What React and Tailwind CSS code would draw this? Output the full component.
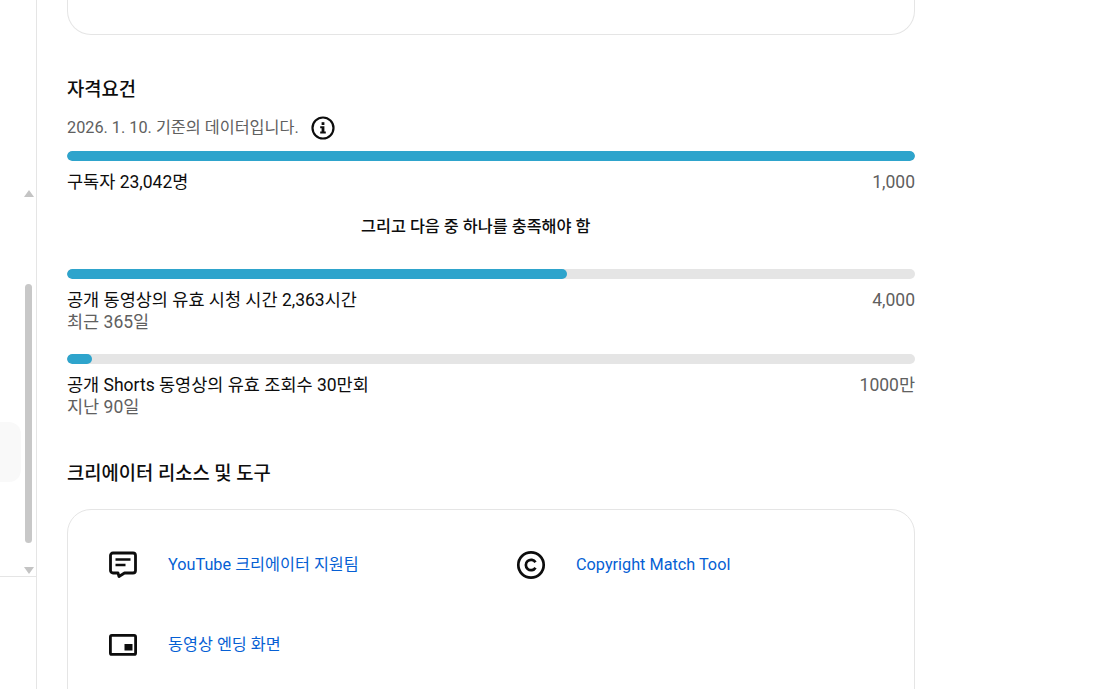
const FONT = "font-['Roboto','Noto_Sans_CJK_KR',sans-serif]";

function Metric({ pct, label, sub, target, className = "" }) {
  return (
    <div className={className}>
      <div className="h-[10px] rounded-full bg-[#e5e5e5] overflow-hidden">
        <div className="h-full rounded-full bg-[#2ea4cc]" style={{ width: `${pct}%` }} />
      </div>
      <div className="flex justify-between mt-[10px] text-[17.5px] leading-[22px]">
        <div className="text-[#0d0d0d]">{label}</div>
        <div className="text-[#606060]">{target}</div>
      </div>
      {sub && <div className="mt-[1px] text-[17.5px] leading-[21px] text-[#606060]">{sub}</div>}
    </div>
  );
}

function InfoIcon() {
  return (
    <svg width="24" height="24" viewBox="0 0 24 24" fill="none">
      <circle cx="12" cy="12" r="10.500" stroke="#0d0d0d" strokeWidth="2.200" />
      <rect x="10.600" y="6.200" width="2.800" height="2.800" fill="#0d0d0d" />
      <path d="M9.200 10.200h4.200v5.300h1.400v2H9.200v-2h1.400V12.200H9.200z" fill="#0d0d0d" />
    </svg>
  );
}

function ChatIcon() {
  return (
    <svg width="30" height="30" viewBox="0 0 30 30" fill="none">
      <path d="M5 3h20a2.500 2.500 0 0 1 2.500 2.500v15a2.500 2.500 0 0 1-2.500 2.500H16.500l-5.500 3.500-1-3.500H5a2.500 2.500 0 0 1-2.500-2.500v-15A2.500 2.500 0 0 1 5 3z" stroke="#0d0d0d" strokeWidth="2.800" strokeLinejoin="round" />
      <path d="M7.500 9.500h15M7.500 15h10" stroke="#0d0d0d" strokeWidth="2.400" />
    </svg>
  );
}

function CopyrightIcon() {
  return (
    <svg width="30" height="30" viewBox="0 0 30 30" fill="none">
      <circle cx="15" cy="15" r="12.700" stroke="#0d0d0d" strokeWidth="2.700" />
      <path d="M19.500 12.300a5.200 5.200 0 1 0 0 5.400" stroke="#0d0d0d" strokeWidth="2.700" />
    </svg>
  );
}

function EndScreenIcon() {
  return (
    <svg width="30" height="30" viewBox="0 0 30 30" fill="none">
      <rect x="2.400" y="5.400" width="25.200" height="19" rx="1.500" stroke="#0d0d0d" strokeWidth="2.800" />
      <rect x="16.500" y="14" width="8" height="6.500" fill="#0d0d0d" />
    </svg>
  );
}

function Tool({ icon, label }) {
  return (
    <div className="flex items-center h-[80px]">
      <div className="w-[30px] h-[30px] mr-[30px] flex items-center justify-center">{icon}</div>
      <a className="text-[16.250px] leading-[22px] text-[#065fd4]">{label}</a>
    </div>
  );
}

export default function App() {
  return (
    <div className={`${FONT} h-[689px] w-[1103px] overflow-hidden bg-white flex`}>
      <aside className="w-[37px] shrink-0 h-full border-r border-[#e5e5e5]">
        <div className="h-[577px] border-b border-[#e5e5e5] flex">
          <div className="w-[21px] h-[60px] mt-[422px] rounded-r-[12px] bg-[#f9f9f9]" />
          <div className="w-[15px] flex flex-col items-center pl-[1px] pr-[1px]">
            <div className="mt-[190px] w-0 h-0 border-x-[5px] border-x-transparent border-b-[7px] border-b-[#c4c4c4]" />
            <div className="mt-[87px] w-[7px] h-[259px] rounded-full bg-[#c8c8c8]" />
            <div className="mt-[24px] w-0 h-0 border-x-[5px] border-x-transparent border-t-[7px] border-t-[#c4c4c4]" />
          </div>
        </div>
      </aside>

      <main className="w-[848px] ml-[30px]">
        <div className="h-[35px] rounded-b-[24px] border border-t-0 border-[#e5e5e5]" />

        <h2 className="mt-[42px] text-[18.750px] leading-[26px] font-medium text-[#0d0d0d]">자격요건</h2>

        <div className="mt-[12px] flex items-center h-[26px]">
          <span className="text-[16.250px] leading-[20px] text-[#606060]">2026. 1. 10. 기준의 데이터입니다.</span>
          <span className="ml-[12px]"><InfoIcon /></span>
        </div>

        <Metric className="mt-[10px]" pct={100} label="구독자 23,042명" target="1,000" />

        <div className="mt-[23px] pl-[294px] text-[16.250px] leading-[22px] font-medium text-[#0d0d0d]">
          그리고 다음 중 하나를 충족해야 함
        </div>

        <Metric
          className="mt-[31px]"
          pct={59}
          label="공개 동영상의 유효 시청 시간 2,363시간"
          sub="최근 365일"
          target="4,000"
        />
        <Metric
          className="mt-[21px]"
          pct={3}
          label="공개 Shorts 동영상의 유효 조회수 30만회"
          sub="지난 90일"
          target="1000만"
        />

        <h2 className="mt-[43px] text-[18.750px] leading-[26px] font-medium text-[#0d0d0d]">크리에이터 리소스 및 도구</h2>

        <div className="mt-[22px] h-[220px] rounded-[24px] border border-[#e5e5e5] pl-[40px] pt-[15px] grid grid-cols-[408px_1fr] content-start">
          <Tool icon={<ChatIcon />} label="YouTube 크리에이터 지원팀" />
          <Tool icon={<CopyrightIcon />} label="Copyright Match Tool" />
          <Tool icon={<EndScreenIcon />} label="동영상 엔딩 화면" />
        </div>
      </main>
    </div>
  );
}
